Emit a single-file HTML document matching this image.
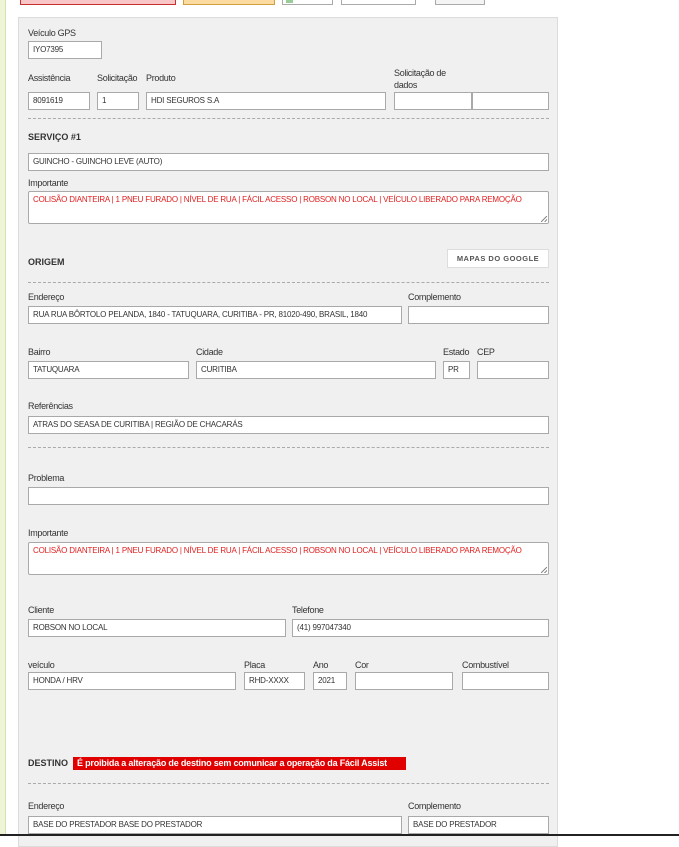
<!DOCTYPE html>
<html><head><meta charset="utf-8"><style>
*{margin:0;padding:0;box-sizing:border-box}
body{width:679px;height:836px;overflow:hidden;background:#fff;position:relative;font-family:"Liberation Sans",sans-serif;font-size:9px;color:#333}
.a{position:absolute}
.strip{left:0;top:0;width:6px;height:836px;background:#eef5d6;border-right:1px solid #d6deb8}
.panel{left:18px;top:17px;width:540px;height:830px;background:#f0f0f0;border:1px solid #dcdcdc}
.l{position:absolute;font-size:9px;color:#333;white-space:nowrap;letter-spacing:-0.3px}
.i{position:absolute;height:18px;background:#fff;border:1px solid #a9a9a9;font-size:8px;line-height:16px;padding-left:4px;color:#333;white-space:nowrap;overflow:hidden;letter-spacing:-0.2px}
.t{position:absolute;height:33px;background:#fff;border:1px solid #a9a9a9;border-radius:2px;font-size:8px;padding:3px 4px;color:#e02020;white-space:nowrap;overflow:hidden;letter-spacing:-0.2px}
.t:after{content:"";position:absolute;right:1px;bottom:1px;width:6px;height:6px;background:linear-gradient(135deg,transparent 45%,#888 45%,#888 55%,transparent 55%,transparent 75%,#888 75%,#888 85%,transparent 85%)}
.h{position:absolute;font-weight:bold;font-size:9px;color:#333}
.d{position:absolute;left:28px;width:521px;border-top:1px dashed #aaa}
</style></head><body>
<div class="a strip"></div>
<div class="a" style="left:20px;top:-2px;width:156px;height:7px;background:#f8c6c6;border:1px solid #c83030"></div>
<div class="a" style="left:183px;top:-2px;width:92px;height:7px;background:#fbdba0;border:1px solid #d0a040"></div>
<div class="a" style="left:282px;top:-2px;width:51px;height:7px;background:#fff;border:1px solid #aaa"></div>
<div class="a" style="left:286px;top:-2px;width:7px;height:5px;background:#9c9"></div>
<div class="a" style="left:341px;top:-2px;width:75px;height:7px;background:#fff;border:1px solid #aaa"></div>
<div class="a" style="left:435px;top:-2px;width:50px;height:7px;background:#f4f4f4;border:1px solid #aaa"></div>
<div class="a panel"></div>

<div class="l" style="left:28px;top:28px">Veículo GPS</div>
<div class="i" style="left:28px;top:41px;width:74px">IYO7395</div>

<div class="l" style="left:28px;top:73px">Assistência</div>
<div class="l" style="left:97px;top:73px">Solicitação</div>
<div class="l" style="left:146px;top:73px">Produto</div>
<div class="l" style="left:394px;top:67px;line-height:12px">Solicitação de<br>dados</div>
<div class="i" style="left:28px;top:92px;width:62px">8091619</div>
<div class="i" style="left:97px;top:92px;width:42px">1</div>
<div class="i" style="left:146px;top:92px;width:240px">HDI SEGUROS S.A</div>
<div class="i" style="left:394px;top:92px;width:78px"></div>
<div class="i" style="left:472px;top:92px;width:77px"></div>
<div class="d" style="top:118px"></div>

<div class="h" style="left:28px;top:132px">SERVIÇO #1</div>
<div class="i" style="left:28px;top:153px;width:521px">GUINCHO - GUINCHO LEVE (AUTO)</div>
<div class="l" style="left:28px;top:178px">Importante</div>
<div class="t" style="left:28px;top:191px;width:521px">COLISÃO DIANTEIRA | 1 PNEU FURADO | NÍVEL DE RUA | FÁCIL ACESSO | ROBSON NO LOCAL | VEÍCULO LIBERADO PARA REMOÇÃO</div>

<div class="a" style="left:447px;top:249px;width:102px;height:19px;background:#fff;border:1px solid #ddd;font-size:7.5px;font-weight:bold;letter-spacing:0.5px;text-align:center;line-height:17px;color:#555">MAPAS DO GOOGLE</div>
<div class="h" style="left:28px;top:257px">ORIGEM</div>
<div class="d" style="top:282px"></div>

<div class="l" style="left:28px;top:292px">Endereço</div>
<div class="l" style="left:408px;top:292px">Complemento</div>
<div class="i" style="left:28px;top:306px;width:374px">RUA RUA BÔRTOLO PELANDA, 1840 - TATUQUARA, CURITIBA - PR, 81020-490, BRASIL, 1840</div>
<div class="i" style="left:408px;top:306px;width:141px"></div>

<div class="l" style="left:28px;top:347px">Bairro</div>
<div class="l" style="left:196px;top:347px">Cidade</div>
<div class="l" style="left:443px;top:347px">Estado</div>
<div class="l" style="left:477px;top:347px">CEP</div>
<div class="i" style="left:28px;top:361px;width:161px">TATUQUARA</div>
<div class="i" style="left:196px;top:361px;width:240px">CURITIBA</div>
<div class="i" style="left:443px;top:361px;width:27px">PR</div>
<div class="i" style="left:477px;top:361px;width:72px"></div>

<div class="l" style="left:28px;top:401px">Referências</div>
<div class="i" style="left:28px;top:416px;width:521px">ATRAS DO SEASA DE CURITIBA | REGIÃO DE CHACARÁS</div>
<div class="d" style="top:447px"></div>

<div class="l" style="left:28px;top:473px">Problema</div>
<div class="i" style="left:28px;top:487px;width:521px"></div>
<div class="l" style="left:28px;top:528px">Importante</div>
<div class="t" style="left:28px;top:542px;width:521px">COLISÃO DIANTEIRA | 1 PNEU FURADO | NÍVEL DE RUA | FÁCIL ACESSO | ROBSON NO LOCAL | VEÍCULO LIBERADO PARA REMOÇÃO</div>

<div class="l" style="left:28px;top:605px">Cliente</div>
<div class="l" style="left:292px;top:605px">Telefone</div>
<div class="i" style="left:28px;top:619px;width:258px">ROBSON NO LOCAL</div>
<div class="i" style="left:292px;top:619px;width:257px">(41) 997047340</div>

<div class="l" style="left:28px;top:660px">veículo</div>
<div class="l" style="left:244px;top:660px">Placa</div>
<div class="l" style="left:313px;top:660px">Ano</div>
<div class="l" style="left:355px;top:660px">Cor</div>
<div class="l" style="left:462px;top:660px">Combustível</div>
<div class="i" style="left:28px;top:672px;width:208px">HONDA / HRV</div>
<div class="i" style="left:244px;top:672px;width:61px">RHD-XXXX</div>
<div class="i" style="left:313px;top:672px;width:34px">2021</div>
<div class="i" style="left:355px;top:672px;width:98px"></div>
<div class="i" style="left:462px;top:672px;width:87px"></div>

<div class="h" style="left:28px;top:758px">DESTINO</div>
<div class="a" style="left:73px;top:757px;width:333px;height:13px;background:#e00000;color:#fff;font-weight:bold;font-size:9px;line-height:13px;padding-left:4px;white-space:nowrap;letter-spacing:-0.2px">É proibida a alteração de destino sem comunicar a operação da Fácil Assist</div>
<div class="d" style="top:783px"></div>

<div class="l" style="left:28px;top:801px">Endereço</div>
<div class="l" style="left:408px;top:801px">Complemento</div>
<div class="i" style="left:28px;top:816px;width:374px">BASE DO PRESTADOR BASE DO PRESTADOR</div>
<div class="i" style="left:408px;top:816px;width:141px">BASE DO PRESTADOR</div>
<div class="a" style="left:0;top:834px;width:679px;height:2px;background:#222"></div>
</body></html>
